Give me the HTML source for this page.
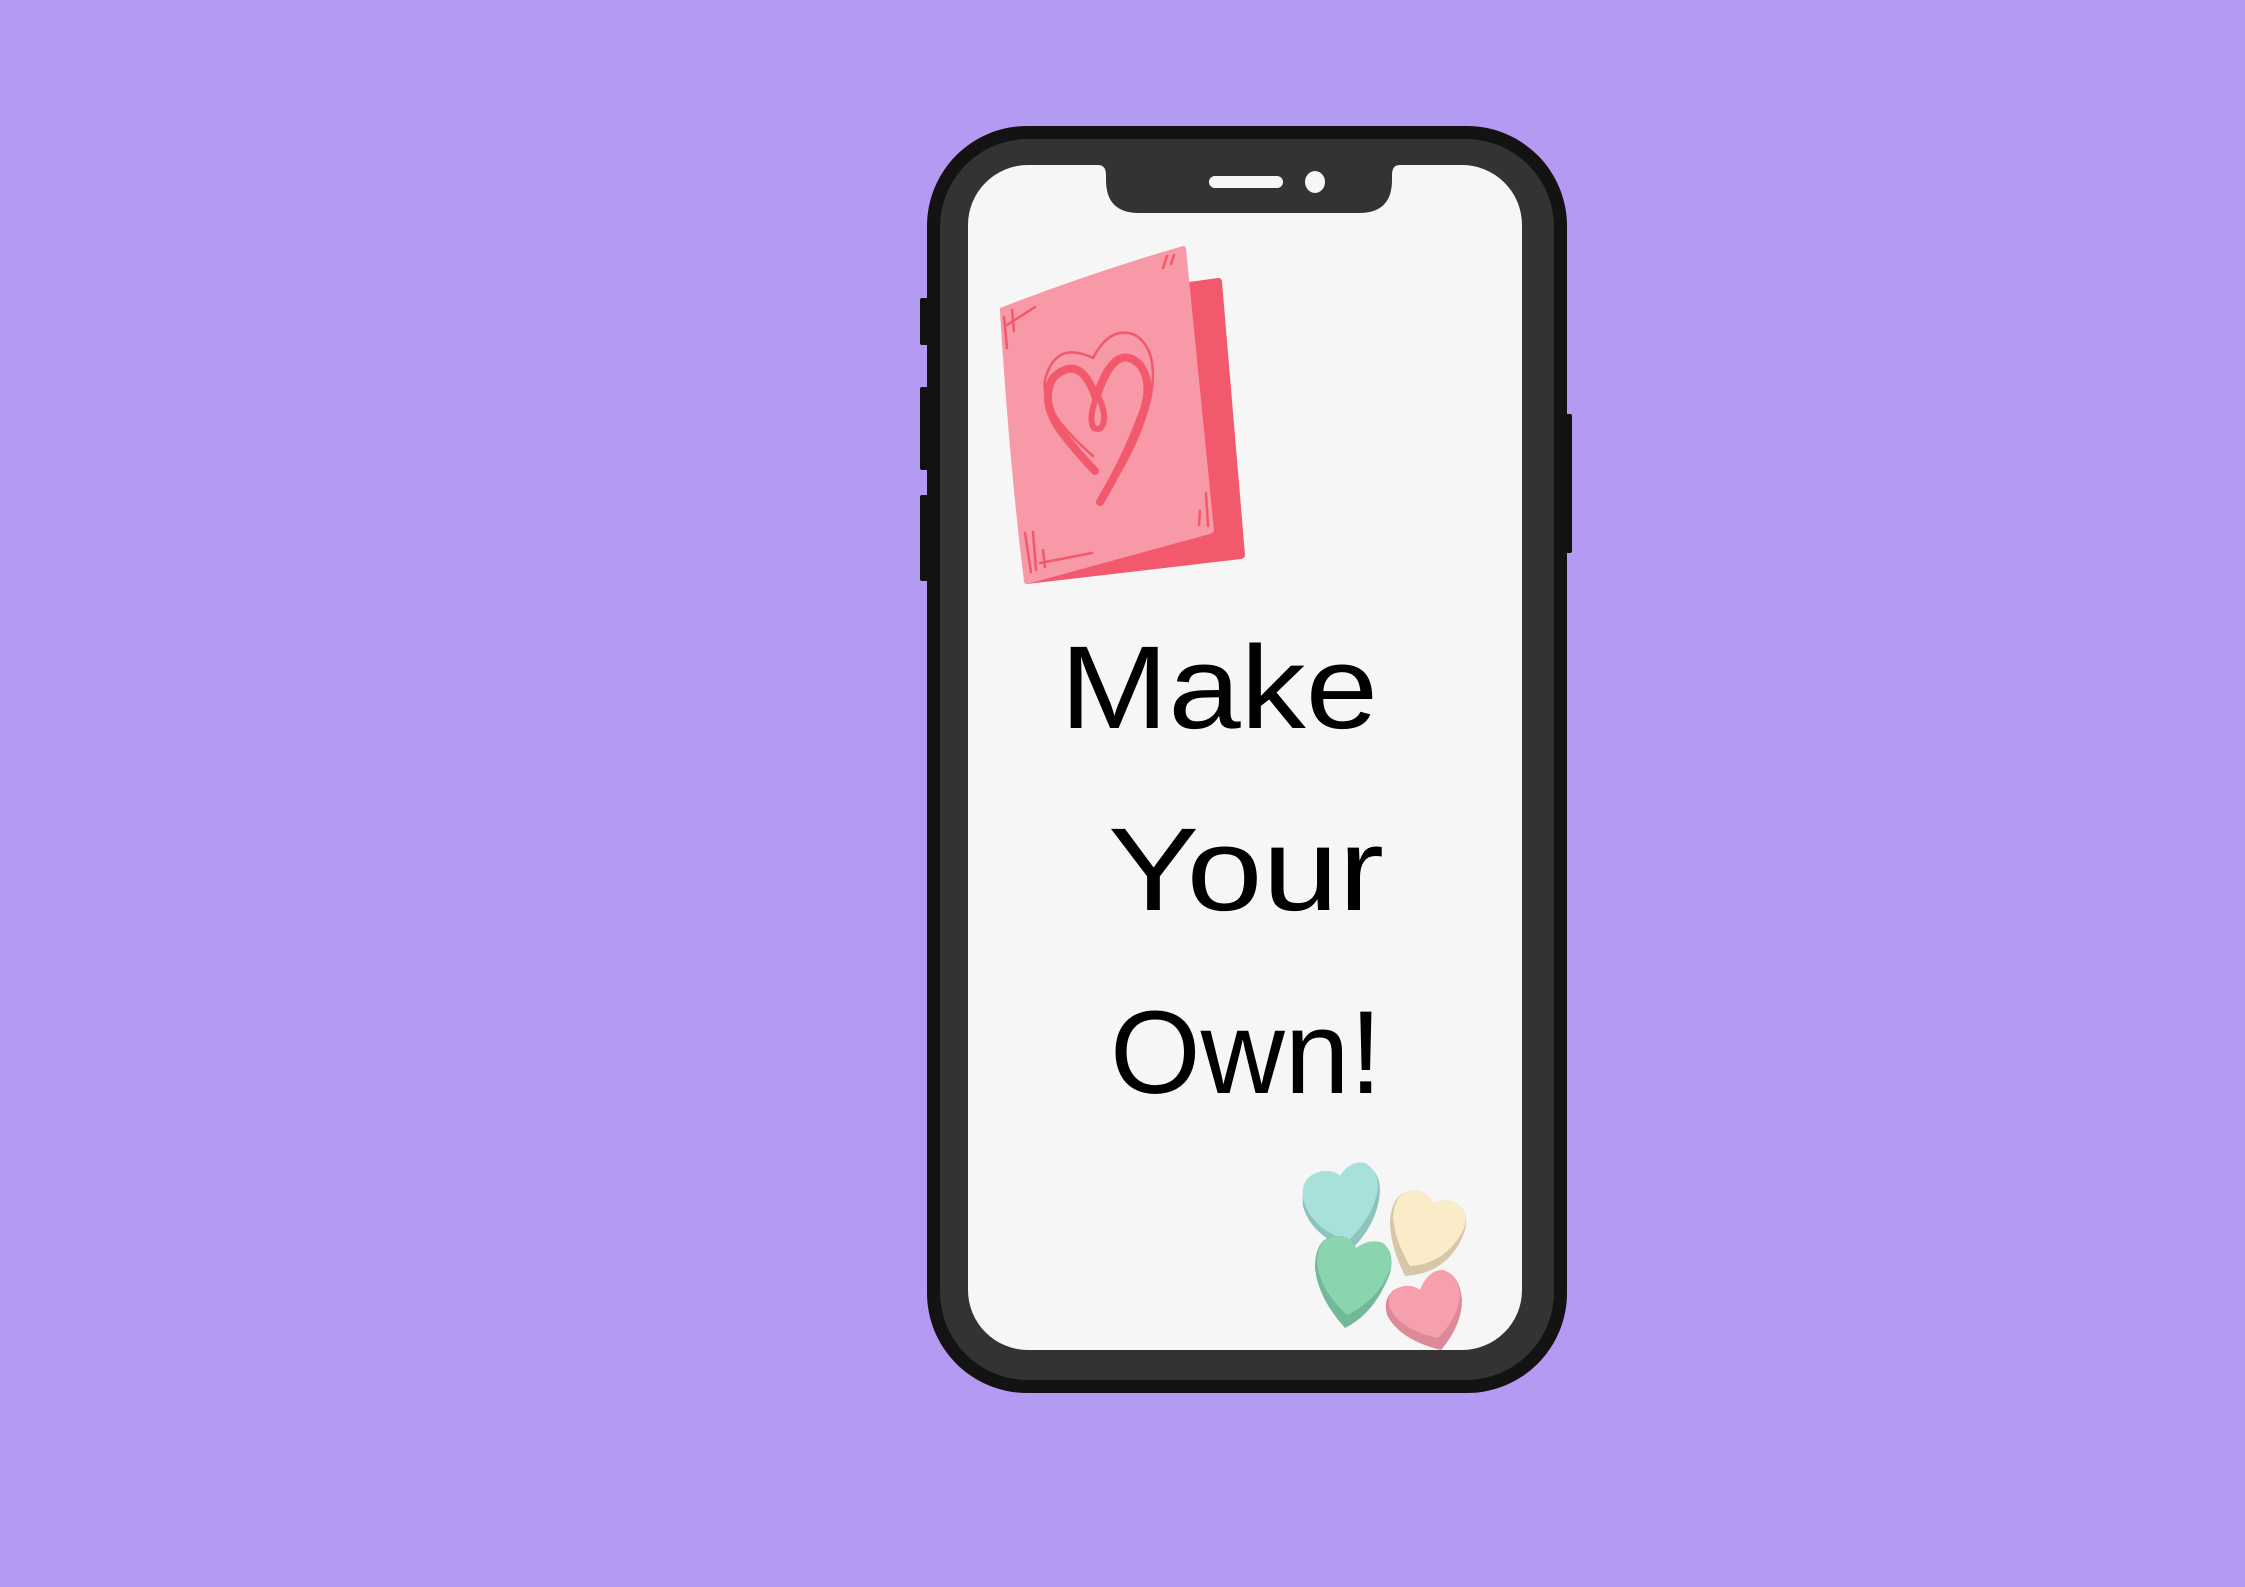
<!DOCTYPE html>
<html><head><meta charset="utf-8"><style>
html,body{margin:0;padding:0;background:#b59af3;}
svg{display:block}
</style></head><body>
<svg width="2245" height="1587" viewBox="0 0 2245 1587" xmlns="http://www.w3.org/2000/svg">
<rect width="2245" height="1587" fill="#b59af3"/>
<rect x="920" y="298" width="10" height="47" rx="2" fill="#111"/>
<rect x="920" y="387" width="10" height="83" rx="2" fill="#111"/>
<rect x="920" y="495" width="10" height="86" rx="2" fill="#111"/>
<rect x="1562" y="414" width="10" height="139" rx="2" fill="#111"/>
<rect x="927" y="126" width="640" height="1267" rx="100" fill="#131313"/>
<rect x="940" y="139" width="614" height="1241" rx="88" fill="#333"/>
<rect x="968" y="165" width="554" height="1185" rx="60" fill="#f6f6f6"/>
<path d="M1086 165 h12 q8 0 8 10 v5 q0 33 33 33 h220 q33 0 33 -33 v-5 q0 -10 8 -10 h12 v-2 h-326z" fill="#333"/>
<rect x="1209" y="176" width="74" height="12" rx="6" fill="#f6f6f6"/>
<ellipse cx="1315" cy="182" rx="10" ry="11" fill="#f6f6f6"/>
<path d="M1189 282 L1218 278 Q1222 278 1222 282 L1245 555 Q1245 558 1241 559 L1027 584 Z" fill="#f2596c"/>
<path d="M1000 308 Q1090 273 1183 246 Q1186 246 1186 249 L1214 530 Q1214 533 1210 534 L1027 584 Q1024 584 1024 581 Q1010 470 1000 312 Z" fill="#f799a6"/>
<g fill="none" stroke="#f2596c" stroke-linecap="round">
<path d="M1096 398 Q1080 352 1053 378 Q1040 400 1060 430 Q1075 450 1095 471" stroke-width="8"/>
<path d="M1096 398 Q1115 340 1140 365 Q1155 385 1140 420 Q1125 460 1100 502" stroke-width="8"/>
<path d="M1096 398 Q1088 420 1094 428 Q1102 432 1104 420 Q1105 410 1098 396" stroke-width="6"/>
<path d="M1093 456 Q1040 410 1045 380 Q1055 340 1093 358 Q1110 325 1135 335 Q1160 350 1150 400 Q1140 440 1115 480" stroke-width="2.5"/>
<path d="M1004 317 L1007 348 M1012 310 L1014 331 M1007 325 L1035 307" stroke-width="2.5"/>
<path d="M1025 533 L1031 572 M1033 532 L1036 570 M1043 550 L1045 567 M1040 563 L1092 553" stroke-width="2.5"/>
<path d="M1206 493 L1208 526 M1200 511 L1199 525 M1163 268 L1167 256 M1171 264 L1174 255" stroke-width="2.5"/>
</g>
<g font-family="'Liberation Sans', sans-serif" fill="#000" font-size="118">
<text x="1060" y="728" textLength="318" lengthAdjust="spacingAndGlyphs">Make</text>
<text x="1108" y="910" textLength="276" lengthAdjust="spacingAndGlyphs">Your</text>
<text x="1110" y="1093" textLength="272" lengthAdjust="spacingAndGlyphs">Own!</text>
</g>
<g transform="translate(0,-34)">
<path d="M1350 1285 Q1310 1268 1303 1240 Q1300 1212 1322 1206 Q1335 1205 1340 1212 Q1350 1196 1365 1199 Q1380 1205 1380 1225 Q1378 1258 1350 1285Z" fill="#8cc3be"/>
<path d="M1348 1275 Q1310 1262 1303 1232 Q1300 1210 1322 1205 Q1335 1204 1340 1210 Q1350 1194 1365 1197 Q1378 1204 1378 1222 Q1374 1250 1348 1275Z" fill="#a8e1db"/>
</g>
<g transform="translate(0,-44)">
<path d="M1405 1320 Q1390 1290 1390 1265 Q1392 1238 1410 1235 Q1425 1232 1433 1247 Q1450 1240 1462 1252 Q1470 1265 1462 1282 Q1445 1318 1405 1320Z" fill="#d6c7a6"/>
<path d="M1410 1310 Q1395 1285 1393 1262 Q1394 1238 1410 1235 Q1425 1232 1433 1247 Q1450 1240 1462 1252 Q1470 1265 1460 1280 Q1442 1308 1410 1310Z" fill="#fbecc9"/>
</g>
<g transform="translate(0,-62)">
<path d="M1345 1390 Q1318 1360 1315 1330 Q1315 1300 1335 1298 Q1350 1297 1356 1310 Q1370 1300 1383 1305 Q1395 1315 1390 1335 Q1375 1375 1345 1390Z" fill="#72b999"/>
<path d="M1347 1377 Q1320 1352 1317 1325 Q1317 1300 1336 1298 Q1350 1297 1356 1310 Q1370 1300 1383 1305 Q1394 1315 1390 1332 Q1378 1362 1347 1377Z" fill="#8ad5ae"/>
</g>
<g transform="translate(0,-80)">
<path d="M1441 1430 Q1400 1420 1387 1395 Q1382 1375 1398 1368 Q1410 1363 1420 1370 Q1428 1350 1443 1350 Q1460 1355 1462 1380 Q1462 1405 1441 1430Z" fill="#dc8a98"/>
<path d="M1438 1418 Q1400 1410 1390 1388 Q1385 1372 1398 1368 Q1410 1363 1420 1370 Q1428 1350 1443 1350 Q1458 1355 1460 1375 Q1458 1398 1438 1418Z" fill="#f7a0ad"/>
</g>
</svg>
</body></html>
